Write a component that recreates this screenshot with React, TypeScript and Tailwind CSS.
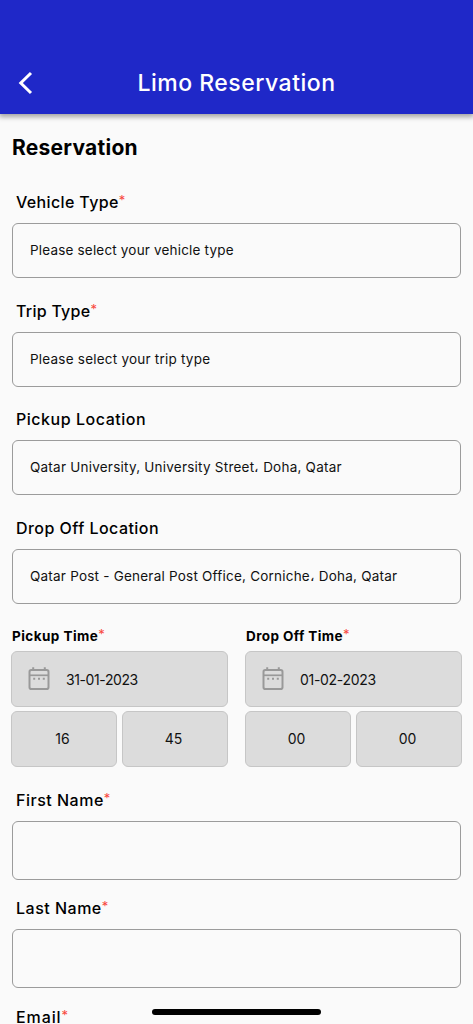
import type { ReactNode } from "react";

function Star({ className = "" }: { className?: string }) {
  return <span className={`-translate-y-px text-[13px] font-normal text-[#f8473c] ${className}`}>*</span>;
}

type FieldProps = {
  label: string;
  labelTracking: string;
  required?: boolean;
  value?: string;
  valueTracking?: string;
  boxHeight?: string;
};

function Field({ label, labelTracking, required, value, valueTracking = "", boxHeight = "h-[55px]" }: FieldProps) {
  return (
    <div className="flex flex-col gap-[9px]">
      <div className="flex h-6 items-center whitespace-nowrap pl-1 text-[16px] font-medium text-black">
        <span className={labelTracking}>{label}</span>
        {required && <Star />}
      </div>
      <div className={`flex items-center whitespace-nowrap rounded-md border border-[#9b9b9b] pl-[17px] text-[13.5px] text-[#111] ${boxHeight}`}>
        <span className={valueTracking}>{value}</span>
      </div>
    </div>
  );
}

function CalendarIcon() {
  return (
    <svg width="22" height="24" viewBox="0 0 22 24" fill="none" stroke="#999" aria-hidden="true">
      <rect x="1.5" y="3.1" width="19" height="19" rx="1.8" strokeWidth="2" />
      <path d="M1.5 8.3h19" strokeWidth="1.7" />
      <path d="M5.2 0.2v3M16.8 0.2v3" strokeWidth="2" />
      <path d="M5.2 11.8h2M10 11.8h2M14.8 11.8h2" strokeWidth="2" />
    </svg>
  );
}

function GreyBox({ children, className = "" }: { children: ReactNode; className?: string }) {
  return (
    <div className={`flex h-14 items-center rounded-md border border-[#c6c6c6] bg-[#dcdcdc] text-[14px] text-[#111] ${className}`}>
      {children}
    </div>
  );
}

type TimeProps = { label: string; tracking: string; date: string; dateTracking: string; hour: string; minute: string };

function TimePicker({ label, tracking, date, dateTracking, hour, minute }: TimeProps) {
  return (
    <div className="flex flex-1 flex-col">
      <div className="flex h-6 items-center whitespace-nowrap pl-px text-[13.5px] font-bold text-black">
        <span className={tracking}>{label}</span>
        <Star />
      </div>
      <GreyBox className="mt-[3px] gap-[16px] pl-[16px]">
        <CalendarIcon />
        <span className={dateTracking}>{date}</span>
      </GreyBox>
      <div className="mt-1 grid grid-cols-2 gap-[5px]">
        <GreyBox className="justify-center pr-[3px] pb-0.5">{hour}</GreyBox>
        <GreyBox className="justify-center pr-[3px] pb-0.5">{minute}</GreyBox>
      </div>
    </div>
  );
}

export default function App() {
  return (
    <div className="relative flex h-[1024px] w-[473px] flex-col overflow-hidden bg-[#fafafa] font-['Inter','Noto_Sans',sans-serif]">
      <header className="grid h-[114px] shrink-0 grid-cols-[52px_1fr_52px] items-center bg-[#1f28c8] pt-[52px] text-white shadow-[0_2px_5px_1px_rgba(0,0,0,0.35)]">
        <svg className="-mt-px ml-[17px]" width="16" height="24" viewBox="0 0 16 24" fill="none" stroke="currentColor" strokeWidth="3" aria-hidden="true">
          <path d="M14 2L3.8 12 14 22" />
        </svg>
        <h1 className="whitespace-nowrap text-center text-[23px] font-medium tracking-[0.5px]">Limo Reservation</h1>
      </header>
      <main className="flex flex-col px-[12px] pt-[20px]">
        <h2 className="h-7 text-[21px] leading-7 font-bold tracking-[0.25px] text-black">Reservation</h2>
        <div className="mt-[28px] flex flex-col gap-[20.5px]">
          <Field label="Vehicle Type" labelTracking="tracking-[0.36px]" required value="Please select your vehicle type" valueTracking="tracking-[0.18px]" />
          <Field label="Trip Type" labelTracking="tracking-[0.26px]" required value="Please select your trip type" valueTracking="tracking-[0.22px]" />
          <Field label="Pickup Location" labelTracking="tracking-[0.53px]" value="Qatar University, University Street، Doha, Qatar" valueTracking="tracking-[0.23px]" />
          <Field label="Drop Off Location" labelTracking="tracking-[0.46px]" value="Qatar Post - General Post Office, Corniche، Doha, Qatar" valueTracking="tracking-[0.22px]" />
        </div>
        <div className="-mx-px mt-[20.5px] flex gap-[17px]">
          <TimePicker label="Pickup Time" tracking="tracking-[0.45px]" date="31-01-2023" dateTracking="tracking-[-0.4px]" hour="16" minute="45" />
          <TimePicker label="Drop Off Time" tracking="tracking-[0.4px]" date="01-02-2023" dateTracking="tracking-[-0.3px]" hour="00" minute="00" />
        </div>
        <div className="mt-[20.5px] flex flex-col gap-[16.5px]">
          <Field label="First Name" labelTracking="tracking-[0.5px]" required boxHeight="h-[59px]" />
          <Field label="Last Name" labelTracking="tracking-[0.5px]" required boxHeight="h-[59px]" />
          <Field label="Email" labelTracking="tracking-[0.9px]" required boxHeight="h-[59px]" />
        </div>
      </main>
      <div className="absolute bottom-[9.5px] left-[152px] h-[6px] w-[169px] rounded-full bg-black" />
    </div>
  );
}
